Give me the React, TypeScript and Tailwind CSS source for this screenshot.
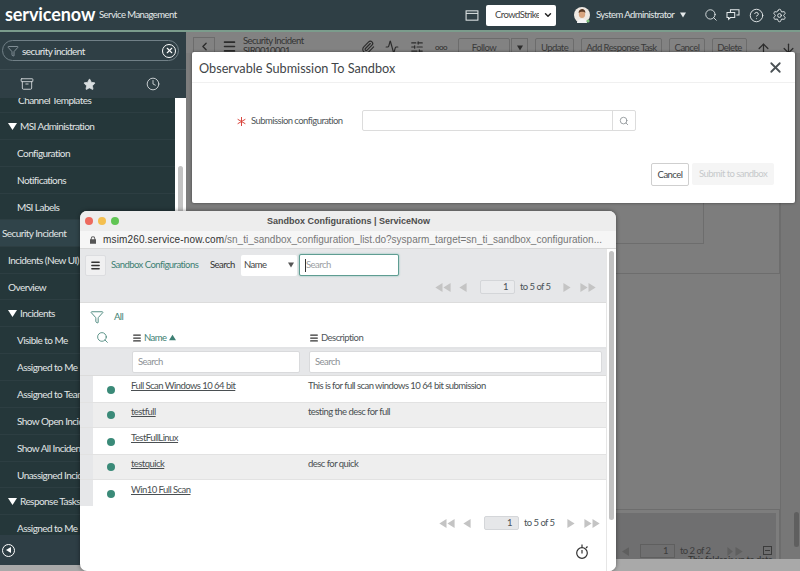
import { Archive, CircleHelp, Clock, Filter, Menu, Search, Settings, Star, ArrowUp, ArrowDown, ChevronLeft, Paperclip, Activity, SlidersHorizontal, X, ChevronDown } from "lucide-react";

const Tri = ({ className }: { className?: string }) => (
  <svg viewBox="0 0 10 10" className={className} fill="currentColor">
    <path d="M0 1h10L5 9z" />
  </svg>
);

const Pager = ({ text, inputBg }: { text: string; inputBg: string }) => (
  <div className="flex items-center text-[#c4c4c4]">
    <svg viewBox="0 0 18 10" className="w-[17px] h-[9px]" fill="currentColor">
      <path d="M9 0v10L1 5zM18 0v10L10 5z" />
    </svg>
    <svg viewBox="0 0 8 10" className="ml-[8px] w-[8px] h-[9px]" fill="currentColor">
      <path d="M8 0v10L0 5z" />
    </svg>
    <div className={`ml-[13px] w-[35px] h-[14px] rounded-[2px] border border-[#d4d6d9] text-right pr-[6px] leading-[12px] text-[#4a5258] ${inputBg}`}>1</div>
    <span className="ml-[5px] w-[31px] text-[#4a5258] whitespace-nowrap">{text}</span>
    <svg viewBox="0 0 8 10" className="ml-[12px] w-[8px] h-[9px]" fill="currentColor">
      <path d="M0 0v10l8-5z" />
    </svg>
    <svg viewBox="0 0 18 10" className="ml-[9px] w-[17px] h-[9px]" fill="currentColor">
      <path d="M0 0v10l8-5zM9 0v10l8-5z" />
    </svg>
  </div>
);

const navItems: { label: string; kind: "head" | "sub" | "top" | "active"; h: number }[] = [
  { label: "MSI Administration", kind: "head", h: 27 },
  { label: "Configuration", kind: "sub", h: 27 },
  { label: "Notifications", kind: "sub", h: 27 },
  { label: "MSI Labels", kind: "sub", h: 26 },
  { label: "Security Incident", kind: "active", h: 27 },
  { label: "Incidents (New UI)", kind: "top", h: 27 },
  { label: "Overview", kind: "top", h: 26 },
  { label: "Incidents", kind: "head", h: 27 },
  { label: "Visible to Me", kind: "sub", h: 27 },
  { label: "Assigned to Me", kind: "sub", h: 27 },
  { label: "Assigned to Team", kind: "sub", h: 27 },
  { label: "Show Open Incidents", kind: "sub", h: 27 },
  { label: "Show All Incidents", kind: "sub", h: 27 },
  { label: "Unassigned Incidents", kind: "sub", h: 26 },
  { label: "Response Tasks", kind: "head", h: 27 },
  { label: "Assigned to Me", kind: "sub", h: 27 },
];

const Sidebar = () => (
  <div className="w-[186px] shrink-0 flex flex-col h-[533px] bg-[#2f3f45]">
    <div className="h-[38px] shrink-0 px-[2px] pt-[8px] border-b border-[#3b4b51]">
      <div className="h-[21px] w-[177px] rounded-full border border-[#718087] flex items-center pl-[4px] pr-[2px] text-[#e6ebec]">
        <Filter className="w-[12px] h-[12px] text-[#9eaab0]" strokeWidth={1.5} />
        <span className="ml-[3px] flex-1 text-[10px] leading-none">security incident</span>
        <span className="w-[14px] h-[14px] rounded-full border-[1.5px] border-white flex items-center justify-center">
          <X className="w-[9px] h-[9px] text-white" strokeWidth={3} />
        </span>
      </div>
    </div>
    <div className="h-[28px] shrink-0 flex items-center text-[#d9dee0]">
      <Archive className="ml-[20px] w-[14px] h-[14px]" strokeWidth={1.5} />
      <Star className="ml-[49px] w-[13px] h-[13px] fill-[#d9dee0]" strokeWidth={1.5} />
      <Clock className="ml-[50px] w-[14px] h-[14px]" strokeWidth={1.5} />
    </div>
    <div className="flex-1 flex min-h-0 overflow-hidden">
      <div className="w-[175px] bg-[#25373a] text-[#e1e6e6] text-[10px] overflow-hidden">
        <div className="h-[15px] pl-[18px] leading-[5px] overflow-hidden border-b border-[#2d3e42]">Channel Templates</div>
        {navItems.map((n, i) => (
          <div
            key={i}
            style={{ height: n.h }}
            className={`flex items-center whitespace-nowrap border-b border-[#2d3e42] ${
              n.kind === "active" ? "pl-[2px] bg-[#30444a]" : n.kind === "sub" ? "pl-[17px]" : "pl-[8px]"
            }`}
          >
            {n.kind === "head" && <Tri className="w-[9px] h-[9px] mr-[3px] text-white" />}
            {n.label}
          </div>
        ))}
      </div>
      <div className="w-[11px] bg-white pl-[3px] pt-[68px]">
        <div className="w-[5px] h-[60px] bg-[#c3c3c3] rounded-full" />
      </div>
    </div>
    <div className="h-[30px] shrink-0 bg-[#2e3e45] flex items-center pl-[2px]">
      <span className="w-[13px] h-[13px] rounded-full border-[1.5px] border-white flex items-center justify-center">
        <svg viewBox="0 0 6 6" className="w-[6px] h-[6px] text-white" fill="currentColor">
          <path d="M5 0v6L0 3z" />
        </svg>
      </span>
    </div>
  </div>
);

const ToolBtn = ({ label, w }: { label: string; w: string }) => (
  <div className={`h-[20px] ${w} rounded-t-[2px] border border-[#6c6c6c] flex items-center justify-center text-[#3a3a3a] whitespace-nowrap`}>{label}</div>
);

const Background = () => (
  <div className="flex-1 relative bg-[#7d7d7d] overflow-hidden">
    <div className="h-[21px] flex items-center bg-[#828282] pl-[7px] text-[#2c2c2c]">
      <div className="w-[22px] h-[18px] border border-[#6c6c6c] flex items-center justify-center mt-[7px]">
        <ChevronLeft className="w-[13px] h-[13px]" strokeWidth={2.5} />
      </div>
      <Menu className="ml-[7px] w-[15px] h-[15px] mt-[8px]" strokeWidth={2.5} />
      <div className="ml-[6px] leading-[10px] w-[118px] mt-[7px] whitespace-nowrap text-[#333]">
        Security Incident
        <br />
        SIR0010001
      </div>
      <Paperclip className="w-[14px] h-[14px] mt-[8px]" />
      <Activity className="w-[14px] h-[14px] ml-[10px] mt-[8px]" />
      <SlidersHorizontal className="w-[14px] h-[14px] ml-[11px] mt-[8px]" />
      <span className="ml-[11px] w-[14px] text-[8px] mt-[8px]">ooo</span>
      <div className="ml-[9px] flex gap-[7px] self-start pt-[6px]">
        <div className="flex gap-[1px]">
          <ToolBtn label="Follow" w="w-[52px]" />
          <div className="w-[17px] h-[20px] border border-[#6c6c6c] flex items-center justify-center">
            <Tri className="w-[6px] h-[6px]" />
          </div>
        </div>
        <ToolBtn label="Update" w="w-[39px]" />
        <ToolBtn label="Add Response Task" w="w-[81px]" />
        <ToolBtn label="Cancel" w="w-[36px]" />
        <ToolBtn label="Delete" w="w-[35px]" />
        <ArrowUp className="ml-[2px] w-[15px] h-[15px] mt-[3px]" />
        <ArrowDown className="ml-[3px] w-[15px] h-[15px] mt-[3px]" />
      </div>
    </div>
    <div className="absolute left-[430px] top-[150px] w-[88px] h-[62px] border-r border-b border-[#6d6d6d]" />
    <div className="absolute left-[400px] top-[150px] w-[194px] h-[92px] border-r border-b border-[#6d6d6d]" />
    <div className="absolute right-0 top-[21px] bottom-0 w-[20px] bg-[#777777] border-l border-[#6d6d6d]">
      <div className="absolute right-[1px] top-[459px] w-[5px] h-[35px] rounded bg-[#5f5f5f]" />
    </div>
    <div className="absolute left-[430px] top-[477px] w-[164px] h-[50px] border-t border-r border-[#6d6d6d] pt-[3px] pr-[3px]">
      <div className="h-full bg-[#6f6f70] pt-[31px] pl-[4px] text-[#3c3c3c] flex items-start leading-[14px]">
        <svg viewBox="0 0 8 10" className="ml-[2px] mt-[3px] w-[7px] h-[9px] text-[#5f5f5f]" fill="currentColor">
          <path d="M8 0v10L0 5z" />
        </svg>
        <div className="ml-[11px] w-[35px] h-[14px] border border-[#5f5f5f] text-right pr-[6px] leading-[12px]">1</div>
        <span className="ml-[5px] w-[30px] whitespace-nowrap">to 2 of 2</span>
        <svg viewBox="0 0 18 10" className="ml-[13px] mt-[3px] w-[25px] h-[9px] text-[#5f5f5f]" fill="currentColor">
          <path d="M0 0v10l6-5zM9 0v10l8-5z" />
        </svg>
        <span className="ml-[15px] mt-[2px] w-[9px] h-[9px] border border-[#3c3c3c] flex items-center justify-center">
          <span className="w-[5px] h-[1px] bg-[#3c3c3c]" />
        </span>
      </div>
    </div>
    <div className="absolute left-0 right-0 bottom-[6px] h-[5px] leading-[12px] text-[#333] pl-[502px] whitespace-nowrap overflow-hidden">This folder is up to date.</div>
    <div className="absolute left-0 right-0 bottom-0 h-[6px] bg-[#a9a9a9]" />
  </div>
);

const Modal = () => (
  <div className="absolute left-[192px] top-[52px] w-[603px] h-[151px] bg-white rounded-[2px] shadow-[0_0_3px_rgba(0,0,0,0.5)] flex flex-col">
    <div className="h-[31px] shrink-0 border-b border-[#f0f0f0] flex items-center justify-between pl-[7px] pr-[11px]">
      <span className="text-[12.7px] tracking-normal text-[#3f4548] mt-[1px]">Observable Submission To Sandbox</span>
      <X className="w-[17px] h-[17px] text-[#4a5155]" strokeWidth={2.5} />
    </div>
    <div className="flex items-center pl-[45px] mt-[27px] h-[21px]">
      <svg viewBox="0 0 10 10" className="w-[9px] h-[9px] mr-[5px] mt-[2px] text-[#d9453d]" stroke="currentColor" strokeWidth="1.1">
        <path d="M5 0v10M0.7 2.5l8.6 5M0.7 7.5l8.6-5" />
      </svg>
      <span className="text-[#50565a] w-[111px] whitespace-nowrap">Submission configuration</span>
      <div className="w-[274px] h-[21px] rounded-[2px] border border-[#dcdcdc] flex justify-end">
        <div className="w-[23px] border-l border-[#dcdcdc] flex items-center justify-center">
          <Search className="w-[10px] h-[10px] text-[#8a9094]" />
        </div>
      </div>
    </div>
    <div className="flex justify-end gap-[3px] pr-[21px] mt-[32px]">
      <div className="w-[38px] h-[23px] rounded-[2px] border border-[#cfcfcf] flex items-center justify-center text-[#3f4548]">Cancel</div>
      <div className="w-[82px] h-[22px] rounded-[2px] bg-[#f5f5f5] flex items-center justify-center text-[#c6c9cb] whitespace-nowrap">Submit to sandbox</div>
    </div>
  </div>
);

const rows = [
  { name: "Full Scan Windows 10 64 bit", desc: "This is for full scan windows 10 64 bit submission" },
  { name: "testfull", desc: "testing the desc for full" },
  { name: "TestFullLinux", desc: "" },
  { name: "testquick", desc: "desc for quick" },
  { name: "Win10 Full Scan", desc: "" },
];

const Popup = () => (
  <div className="absolute left-[80px] top-[211px] w-[536px] h-[360px] bg-white rounded-[7px] overflow-hidden shadow-[0_0_4px_rgba(0,0,0,0.45)] flex flex-col">
    <div className="h-[20px] shrink-0 bg-[#ededed] flex items-center pl-[5px]">
      <span className="w-[8px] h-[8px] rounded-full bg-[#ed6a5e]" />
      <span className="ml-[5px] w-[8px] h-[8px] rounded-full bg-[#f4bf4f]" />
      <span className="ml-[5px] w-[8px] h-[8px] rounded-full bg-[#61c554]" />
      <span className="ml-[148px] font-bold text-[9px] tracking-normal text-[#4c4c4c] font-['Liberation_Sans',sans-serif] whitespace-nowrap">Sandbox Configurations | ServiceNow</span>
    </div>
    <div className="h-[18px] shrink-0 bg-[#f6f6f6] border-b border-[#d8d8d8] flex items-center pl-[10px] text-[10px] font-['Liberation_Sans',sans-serif] tracking-[0.15px] whitespace-nowrap overflow-hidden">
      <svg viewBox="0 0 8 10" className="shrink-0 w-[6px] h-[8px] text-[#555]" fill="currentColor">
        <path d="M1 4V3a3 3 0 016 0v1h1v6H0V4zm1.2 0h3.6V3a1.8 1.8 0 00-3.6 0z" />
      </svg>
      <span className="ml-[7px] text-[#333]">msim260.service-now.com</span>
      <span className="text-[#777] tracking-normal">/sn_ti_sandbox_configuration_list.do?sysparm_target=sn_ti_sandbox_configuration...</span>
    </div>
    <div className="flex-1 flex min-h-0">
      <div className="w-[526px] flex flex-col">
        <div className="h-[54px] shrink-0 bg-[#e6e7e9] border-b border-[#dcdcdc] pt-[5px]">
          <div className="flex items-center h-[22px] pl-[5px]">
            <div className="w-[21px] h-[21px] bg-[#f0f0f1] border border-[#dcdde0] rounded-[2px] flex items-center justify-center">
              <Menu className="w-[11px] h-[11px] text-[#333]" strokeWidth={3} />
            </div>
            <span className="ml-[5px] text-[#3d7f73] w-[99px] whitespace-nowrap">Sandbox Configurations</span>
            <span className="text-[#333] w-[31px]">Search</span>
            <div className="w-[56px] h-[21px] bg-white rounded-[2px] flex items-center justify-between pl-[3px] pr-[3px] text-[#444]">
              Name
              <Tri className="w-[6px] h-[6px] text-[#555]" />
            </div>
            <div className="ml-[2px] w-[100px] h-[22px] bg-white rounded-[2px] border border-[#5f9d92] shadow-[0_0_2px_#79b5aa] flex items-center pl-[5px] text-[#9a9ea2]">
              <span className="w-px h-[13px] bg-[#333]" />
              Search
            </div>
          </div>
          <div className="mt-[4px] flex justify-end pr-[9px]">
            <Pager text="to 5 of 5" inputBg="bg-[#eaebed]" />
          </div>
        </div>
        <div className="h-[46px] shrink-0 border-b-[2px] border-[#e2e3e5]">
          <div className="flex items-center pl-[10px] pt-[7px] h-[21px]">
            <Filter className="w-[14px] h-[14px] text-[#3d7f73]" strokeWidth={1.5} />
            <span className="ml-[10px] text-[#3d7f73]">All</span>
          </div>
          <div className="flex items-center mt-[7px] h-[13px]">
            <Search className="ml-[16px] w-[13px] h-[13px] text-[#3d7f73]" strokeWidth={1.5} />
            <Menu className="ml-[23px] w-[10px] h-[10px] text-[#333]" strokeWidth={3} />
            <span className="ml-[2px] w-[23px] text-[#3d7f73]">Name</span>
            <Tri className="ml-[2px] w-[7px] h-[7px] rotate-180 text-[#3d7f73]" />
            <Menu className="ml-[133px] w-[10px] h-[10px] text-[#333]" strokeWidth={3} />
            <span className="ml-[2px] text-[#50565a]">Description</span>
          </div>
        </div>
        <div className="h-[27px] shrink-0 bg-[#e6e7e9] border-b border-[#dcdcdc] flex items-center pl-[52px] pr-[4px]">
          <div className="w-[168px] h-[22px] bg-white rounded-[2px] border border-[#d9dadc] pl-[5px] leading-[20px] text-[#8c9195]">Search</div>
          <div className="ml-[9px] flex-1 h-[22px] bg-white rounded-[2px] border border-[#d9dadc] pl-[5px] leading-[20px] text-[#8c9195]">Search</div>
        </div>
        <div>
          {rows.map((r, i) => (
            <div key={r.name} className={`flex h-[26px] ${i % 2 === 1 ? "bg-[#eeeeee] border-y border-[#e2e2e2]" : ""}`}>
              <div className="w-[13px] h-full bg-[#e6e7e9]" />
              <div className={`w-[38px] flex items-center pl-[14px] ${i % 2 === 1 ? "" : "pt-[2px]"}`}>
                <span className="w-[8px] h-[8px] rounded-full bg-[#3a8a78]" />
              </div>
              <span className={`w-[177px] leading-[12px] text-[#4a4f52] ${i % 2 === 1 ? "pt-[3px]" : "pt-[4px]"}`}>
                <span className="underline">{r.name}</span>
              </span>
              <span className={`leading-[12px] text-[#4a4f52] whitespace-nowrap ${i % 2 === 1 ? "pt-[3px]" : "pt-[4px]"}`}>{r.desc}</span>
            </div>
          ))}
        </div>
        <div className="mt-[10px] flex justify-end pr-[5px]">
          <Pager text="to 5 of 5" inputBg="bg-[#e6e7e9]" />
        </div>
        <div className="mt-[13px] flex justify-end pr-[17px]">
          <svg viewBox="0 0 14 16" className="w-[14px] h-[17px] text-[#333]" fill="none" stroke="currentColor" strokeWidth="1.2">
            <circle cx="7" cy="9.5" r="5.3" />
            <path d="M7 4V1M7 6.5v3.5M11 4.5l1.5-1.5" />
          </svg>
        </div>
      </div>
      <div className="w-[10px] border-l border-[#e6e6e6] pl-[2px] pt-[2px] bg-white">
        <div className="w-[5px] h-[269px] rounded-full bg-[#c2c2c2]" />
      </div>
    </div>
  </div>
);

export default function App() {
  return (
    <div className="relative w-[800px] h-[571px] overflow-hidden font-['Lato','Noto_Sans',sans-serif] text-[9.5px] leading-[12px] tracking-[-0.55px] bg-[#a9a9a9]">
      <header className="h-[32px] bg-[#2f3f45] border-b-[2px] border-[#7b9c8c] flex items-center text-[#e5eaeb]">
        <span className="ml-[5px] w-[87px] text-[18px] font-bold leading-none tracking-[-0.1px] text-white -mt-[2px]">servicenow</span>
        <span className="ml-[7px] w-[75px] whitespace-nowrap">Service Management</span>
        <svg viewBox="0 0 16 13" className="ml-[291px] w-[14px] h-[11px]" fill="none" stroke="currentColor" strokeWidth="1.2">
          <rect x="1" y="1" width="14" height="11" />
          <path d="M1 4h14" />
        </svg>
        <div className="ml-[7px] w-[70px] h-[21px] bg-white rounded-[2px] flex items-center justify-between pl-[9px] pr-[3px] text-[#444]">
          <span className="w-[44px] overflow-hidden whitespace-nowrap">CrowdStrike</span>
          <ChevronDown className="w-[10px] h-[10px] text-[#222]" strokeWidth={3.5} />
        </div>
        <svg viewBox="0 0 16 16" className="ml-[18px] w-[16px] h-[16px]">
          <circle cx="8" cy="8" r="8" fill="#efe9e2" />
          <path d="M3 16c0-3 2-4 5-4s5 1 5 4z" fill="#f4f4f4" />
          <ellipse cx="8" cy="7" rx="3.2" ry="4" fill="#d9a57f" />
          <path d="M4.6 6c0-3 2-4 3.6-4s3.2 1 3.2 4c-1-1.6-5-1.8-6.8 0z" fill="#5a3a25" />
          <circle cx="14" cy="14" r="1.6" fill="#7fc37e" />
        </svg>
        <span className="ml-[6px] w-[78px] whitespace-nowrap">System Administrator</span>
        <Tri className="ml-[6px] w-[6px] h-[6px]" />
        <Search className="ml-[18px] w-[14px] h-[14px]" strokeWidth={1.5} />
        <svg viewBox="0 0 16 14" className="ml-[8px] w-[14px] h-[12px]" fill="none" stroke="currentColor" strokeWidth="1.2">
          <path d="M1 4h9v6H5l-2 2v-2H1zM5 4V1h10v6h-3" />
        </svg>
        <CircleHelp className="ml-[9px] w-[15px] h-[15px]" strokeWidth={1.5} />
        <Settings className="ml-[8px] w-[15px] h-[15px]" strokeWidth={1.5} />
      </header>
      <div className="flex">
        <Sidebar />
        <Background />
      </div>
      <Modal />
      <Popup />
    </div>
  );
}
